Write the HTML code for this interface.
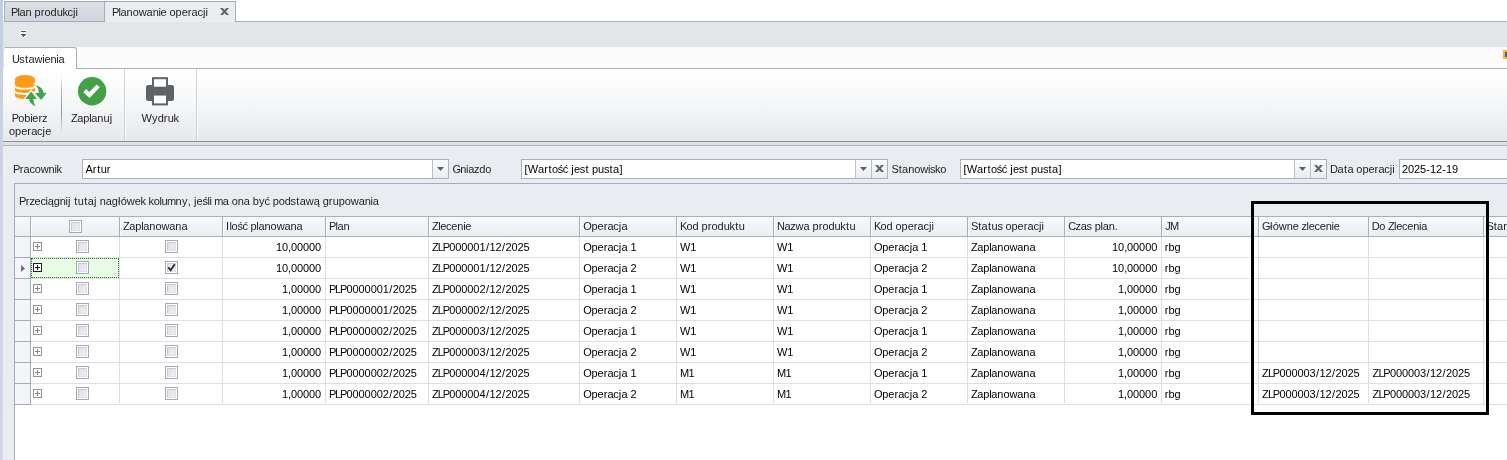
<!DOCTYPE html>
<html><head><meta charset="utf-8">
<style>
html,body{margin:0;padding:0;}
body{width:1507px;height:460px;overflow:hidden;position:relative;background:#e9ecf1;font-family:"Liberation Sans",sans-serif;font-size:11px;}
div,span,svg,i,b{position:absolute;box-sizing:border-box;display:block;}
.t{white-space:pre;line-height:12px;font-size:11px;color:#1e1e1e;font-kerning:none;}
.t span{position:static;display:inline;}
.k0{letter-spacing:-0.9px}.k1{letter-spacing:-0.3px}.k2{letter-spacing:-0.1px}.k3{letter-spacing:0.1px}.k4{letter-spacing:-0.5px}.k5{letter-spacing:0.05px}.k6{letter-spacing:-0.45px}.k7{letter-spacing:-0.05px}.k8{letter-spacing:-0.7px}.k9{letter-spacing:0.2px}.k10{letter-spacing:0.4px}.k11{letter-spacing:-0.2px}.k12{letter-spacing:-0.75px}.k13{letter-spacing:-0.4px}.k14{letter-spacing:0.55px}.k15{letter-spacing:0.0px}.k16{letter-spacing:0.65px}.k17{letter-spacing:0.35px}.k18{letter-spacing:-0.85px}.k19{letter-spacing:0.3px}.k20{letter-spacing:-0.25px}.k21{letter-spacing:0.25px}.k22{letter-spacing:0.45px}.k23{letter-spacing:0.95px}.k24{letter-spacing:-0.55px}.k25{letter-spacing:-0.65px}.k26{letter-spacing:-0.6px}.k27{letter-spacing:-0.35px}.k28{letter-spacing:-1.15px}.k29{letter-spacing:-1.25px}
/* top tab strip */
#strip{left:0;top:0;width:3px;height:460px;background:linear-gradient(#c4cee3,#cad4e5 45%,#ced8e9);}
#strip2{left:3px;top:146px;width:1px;height:314px;background:#eff1f5;}
#tabbar{left:3px;top:0;width:1504px;height:21px;background:#fff;}
#tab1{left:4px;top:1px;width:101px;height:21px;border:1px solid #a4acb7;background:linear-gradient(#dadde2,#d2d6dc);}
#tab2{left:104px;top:1px;width:132px;height:21px;border:1px solid #a4acb7;border-bottom:none;background:#eaecf0;}
#tabline{left:236px;top:21px;width:1271px;height:1px;background:#a9b0ba;}
#qat{left:3px;top:22px;width:1504px;height:25px;background:#e3e6e9;}
/* ribbon */
#rhead{left:3px;top:47px;width:1504px;height:21px;background:#fbfbfb;}
#rheadline{left:76px;top:68px;width:1431px;height:1px;background:#aab0b8;}
#rtab{left:3px;top:47px;width:74px;height:22px;border:1px solid #aab0b8;border-left-color:#dfe3ea;border-bottom:none;border-radius:3px 3px 0 0;background:#fff;}
#rbody{left:3px;top:69px;width:1504px;height:72px;background:linear-gradient(#ffffff 0%,#f7f8f9 40%,#e6e8ec 100%);}
#rbottom{left:3px;top:141px;width:1504px;height:1px;background:#8d9197;}
#rgap{left:3px;top:142px;width:1504px;height:4px;background:linear-gradient(#dcdfe2,#e4e6e9);}
#ptop{left:3px;top:145px;width:1504px;height:1px;background:#b0b5bc;}
.rsep{top:76px;width:1px;height:58px;background:linear-gradient(rgba(160,164,170,0),#b0b4b9 25%,#92969c 65%,rgba(160,164,170,0));}
.gsep{top:69px;width:2px;height:72px;border-left:1px solid #ced1d6;background:rgba(255,255,255,.7);}
/* inputs */
.inp{top:159px;height:20px;border:1px solid #a9b1bd;background:#fff;}
.btn{top:160px;height:18px;width:16px;border-left:1px solid #b9c0ca;background:linear-gradient(#fdfdfe,#e9ebef);}
/* grid */
#gridborder{left:14px;top:183px;width:1500px;height:300px;border:1px solid #a4acb8;background:#fff;}
#group{left:15px;top:184px;width:1492px;height:32px;background:#e9ecf1;}
#hdr{left:15px;top:216px;width:1492px;height:21px;border-top:1px solid #a7afbb;border-bottom:1px solid #a7afbb;background:linear-gradient(#f7f8fa,#eceef2);}
#ind{left:15px;top:237px;width:16px;height:168px;background:#f4f5f8;border-right:1px solid #a3abb8;}
.indline{left:15px;width:16px;height:1px;background:#a3abb8;}
.hsep{top:217px;width:2px;height:19px;border-left:1px solid #a7afbb;background:#fafbfc;}
.vline{top:237px;width:1px;height:168px;background:#dddfe4;}
.rowline{left:15px;width:1492px;height:1px;background:#dddfe4;}
.cb{width:13px;height:13px;border:1px solid #a3aab6;background:#fff;}
.cb:before{content:"";position:absolute;box-sizing:border-box;left:1px;top:1px;width:9px;height:9px;border:1px solid #dfe1e5;border-top-color:#c6cad0;border-left-color:#c6cad0;background:linear-gradient(135deg,#e0e1e3,#efeff0);}
.exp{left:33px;width:9px;height:9px;border:1px solid #919397;background:#fff;}
.exp i{left:1px;top:3px;width:5px;height:1px;background:#85878b;}
.exp b{left:3px;top:1px;width:1px;height:5px;background:#85878b;}
.exp.sel{border-color:#222;border-width:1px;outline:0;}
.exp.sel i,.exp.sel b{background:#111;}
#focus{background:#e8fbe5;border:1px dotted #0a7d0a;}
#txt{left:0;top:0;width:1507px;height:460px;will-change:transform;}
</style></head><body>
<div id="strip"></div>
<div id="strip2"></div>
<div id="tabbar"></div>
<div id="tabline"></div>
<div id="tab1"></div>
<div id="tab2"></div>
<div id="qat"></div>
<div id="rhead"></div>
<div id="rheadline"></div>
<div id="rtab"></div>
<div id="rbody"></div>
<div id="rbottom"></div>
<div id="rgap"></div>
<div id="ptop"></div>
<div class="rsep" style="left:61px"></div>
<div class="gsep" style="left:124px"></div>
<div class="gsep" style="left:196px"></div>
<!-- inputs -->
<div class="inp" style="left:82px;width:367px"></div><div class="btn" style="left:432px"></div>
<div class="inp" style="left:521px;width:367px"></div><div class="btn" style="left:855px"></div><div class="btn" style="left:871px"></div>
<div class="inp" style="left:960px;width:367px"></div><div class="btn" style="left:1294px"></div><div class="btn" style="left:1310px"></div>
<div class="inp" style="left:1399px;width:120px"></div>
<!-- qat arrow -->
<svg style="left:19px;top:29px" width="9" height="10" viewBox="19 29 9 10">
<path d="M20.3 30.3 H26.7 V35 L23.5 38.3 L20.3 35 Z" fill="#f1f3f5" stroke="#eceef0" stroke-width="0.8"/>
<rect x="21" y="31" width="5" height="1" fill="#555a61"/>
<rect x="21" y="34" width="5" height="1" fill="#555a61"/><rect x="22" y="35" width="3" height="1" fill="#555a61"/><rect x="23" y="36" width="1" height="1" fill="#555a61"/>
</svg>
<!-- tab close X -->
<svg style="left:220px;top:8px" width="9" height="7" viewBox="0 0 9 7"><path d="M0 0 H2.8 L9 7 H6.2 Z" fill="#5f636a"/><path d="M9 0 H6.2 L0 7 H2.8 Z" fill="#5f636a"/></svg>
<!-- DB icon -->
<svg style="left:14px;top:74px" width="34" height="34" viewBox="14 74 34 34">
 <defs><clipPath id="dbc"><path d="M14.9 79.5 A10.1 4.6 0 0 1 35.1 79.5 L35.1 95.8 A10.1 3.2 0 0 1 14.9 95.8 Z"/></clipPath></defs>
 <path d="M14.9 79.5 A10.1 4.6 0 0 1 35.1 79.5 L35.1 95.8 A10.1 3.2 0 0 1 14.9 95.8 Z" fill="#ff9a14"/>
 <path d="M14.9 85.7 A10.1 3 0 0 0 35.1 85.7" fill="none" stroke="#fff" stroke-width="1.8"/>
 <path d="M14.9 91.3 A10.1 2.7 0 0 0 35.1 91.3" fill="none" stroke="#fff" stroke-width="1.8"/>
 <g clip-path="url(#dbc)">
  <path d="M31.2 91.4 L36.8 98.9 L33.3 98.9 Q33.6 103.5 35.6 106.3 Q30 104 28.9 98.9 L25.2 98.9 Z" fill="#fff" stroke="#fff" stroke-width="2.2"/>
  <path d="M41.1 100.1 L46.7 93.1 L43.8 93.1 Q43 87.2 36 85.2 Q38.7 88.3 38.9 93.1 L35.1 93.1 Z" fill="#fff" stroke="#fff" stroke-width="2.2"/>
 </g>
 <path d="M31.2 91.4 L36.8 98.9 L33.3 98.9 Q33.6 103.5 35.6 106.3 Q30 104 28.9 98.9 L25.2 98.9 Z" fill="#3ea54a"/>
 <path d="M41.1 100.1 L46.7 93.1 L43.8 93.1 Q43 87.2 36 85.2 Q38.7 88.3 38.9 93.1 L35.1 93.1 Z" fill="#3ea54a"/>
</svg>
<!-- Check icon -->
<svg style="left:76px;top:75px" width="32" height="32" viewBox="76 75 32 32">
 <circle cx="92.1" cy="91.2" r="14.2" fill="#43a047"/>
 <path d="M84.7 90.6 L89.5 95 L98.2 85.9" fill="none" stroke="#fff" stroke-width="4.2"/>
</svg>
<!-- Printer icon -->
<svg style="left:144px;top:75px" width="32" height="32" viewBox="144 75 32 32">
 <path d="M148.5 85 H171.5 Q174 85 174 87.5 V98.5 Q174 101 171.5 101 H148.5 Q146 101 146 98.5 V87.5 Q146 85 148.5 85 Z" fill="#5f6368"/>
 <rect x="153" y="78.2" width="14" height="9.5" fill="#fff" stroke="#5f6368" stroke-width="2"/>
 <rect x="153" y="94.6" width="14" height="9.8" fill="#fff" stroke="#5f6368" stroke-width="2"/>
</svg>
<!-- dropdown arrows -->
<svg class="dd" style="left:437px;top:167px" width="7" height="4" viewBox="0 0 7 4"><path d="M0 0 H7 L3.5 4 Z" fill="#596069"/></svg>
<svg class="dd" style="left:860px;top:167px" width="7" height="4" viewBox="0 0 7 4"><path d="M0 0 H7 L3.5 4 Z" fill="#596069"/></svg>
<svg class="dd" style="left:1299px;top:167px" width="7" height="4" viewBox="0 0 7 4"><path d="M0 0 H7 L3.5 4 Z" fill="#596069"/></svg>
<!-- clear X buttons -->
<svg style="left:875px;top:165px" width="9" height="7" viewBox="0 0 9 7"><path d="M0 0 H2.8 L9 7 H6.2 Z" fill="#5f636a"/><path d="M9 0 H6.2 L0 7 H2.8 Z" fill="#5f636a"/></svg>
<svg style="left:1314px;top:165px" width="9" height="7" viewBox="0 0 9 7"><path d="M0 0 H2.8 L9 7 H6.2 Z" fill="#5f636a"/><path d="M9 0 H6.2 L0 7 H2.8 Z" fill="#5f636a"/></svg>
<!-- orange thing at right edge -->
<div style="left:1503px;top:50px;width:4px;height:9px;background:#fbb03b"></div>
<div style="left:1505px;top:52px;width:2px;height:5px;background:#5a6068"></div>

<!-- grid -->
<div id="gridborder"></div>
<div id="group"></div>
<div id="hdr"></div>
<div id="ind"></div>
<div class="hsep" style="left:119px"></div>
<div class="vline" style="left:119px"></div>
<div class="hsep" style="left:222px"></div>
<div class="vline" style="left:222px"></div>
<div class="hsep" style="left:325px"></div>
<div class="vline" style="left:325px"></div>
<div class="hsep" style="left:428px"></div>
<div class="vline" style="left:428px"></div>
<div class="hsep" style="left:579px"></div>
<div class="vline" style="left:579px"></div>
<div class="hsep" style="left:676px"></div>
<div class="vline" style="left:676px"></div>
<div class="hsep" style="left:773px"></div>
<div class="vline" style="left:773px"></div>
<div class="hsep" style="left:870px"></div>
<div class="vline" style="left:870px"></div>
<div class="hsep" style="left:967px"></div>
<div class="vline" style="left:967px"></div>
<div class="hsep" style="left:1064px"></div>
<div class="vline" style="left:1064px"></div>
<div class="hsep" style="left:1161px"></div>
<div class="vline" style="left:1161px"></div>
<div class="hsep" style="left:1258px"></div>
<div class="vline" style="left:1258px"></div>
<div class="hsep" style="left:1368px"></div>
<div class="vline" style="left:1368px"></div>
<div class="hsep" style="left:1483px"></div>
<div class="vline" style="left:1483px"></div>
<div class="hsep" style="left:30px"></div>
<div class="rowline" style="top:257px"></div>
<div class="indline" style="top:257px"></div>
<div class="exp" style="top:242px"><i></i><b></b></div>
<div class="cb" style="left:76px;top:240px"></div>
<div class="cb" style="left:165px;top:240px"></div>
<div class="rowline" style="top:278px"></div>
<div class="indline" style="top:278px"></div>
<div id="focus" style="left:31px;top:258px;width:88px;height:20px"></div>
<div class="exp sel" style="top:263px"><i></i><b></b></div>
<div class="cb" style="left:76px;top:261px"></div>
<div class="cb" style="left:165px;top:261px"><svg style="left:1px;top:1px" width="9" height="9" viewBox="0 0 9 9"><path d="M1.2 4.2 L3.6 7.2 L7.8 1.2" fill="none" stroke="#2a2a2a" stroke-width="1.8"/></svg></div>
<div class="rowline" style="top:299px"></div>
<div class="indline" style="top:299px"></div>
<div class="exp" style="top:284px"><i></i><b></b></div>
<div class="cb" style="left:76px;top:282px"></div>
<div class="cb" style="left:165px;top:282px"></div>
<div class="rowline" style="top:320px"></div>
<div class="indline" style="top:320px"></div>
<div class="exp" style="top:305px"><i></i><b></b></div>
<div class="cb" style="left:76px;top:303px"></div>
<div class="cb" style="left:165px;top:303px"></div>
<div class="rowline" style="top:341px"></div>
<div class="indline" style="top:341px"></div>
<div class="exp" style="top:326px"><i></i><b></b></div>
<div class="cb" style="left:76px;top:324px"></div>
<div class="cb" style="left:165px;top:324px"></div>
<div class="rowline" style="top:362px"></div>
<div class="indline" style="top:362px"></div>
<div class="exp" style="top:347px"><i></i><b></b></div>
<div class="cb" style="left:76px;top:345px"></div>
<div class="cb" style="left:165px;top:345px"></div>
<div class="rowline" style="top:383px"></div>
<div class="indline" style="top:383px"></div>
<div class="exp" style="top:368px"><i></i><b></b></div>
<div class="cb" style="left:76px;top:366px"></div>
<div class="cb" style="left:165px;top:366px"></div>
<div class="rowline" style="top:404px"></div>
<div class="indline" style="top:404px"></div>
<div class="exp" style="top:389px"><i></i><b></b></div>
<div class="cb" style="left:76px;top:387px"></div>
<div class="cb" style="left:165px;top:387px"></div>
<div class="cb" style="left:69px;top:220px"></div>
<div id="txt"><span class="t" style="left:11.00px;top:6px"><span class="k0">P</span><span class="k1">l</span><span class="k2">an </span><span class="k3">pr</span><span class="k2">od</span><span class="k1">u</span><span class="k4">k</span><span class="k5">cj</span><span class="k6">i</span></span>
<span class="t" style="left:112.00px;top:6px"><span class="k0">P</span><span class="k1">l</span><span class="k2">an</span><span class="k7">ow</span><span class="k2">a</span><span class="k1">ni</span><span class="k2">e op</span><span class="k3">er</span><span class="k1">a</span><span class="k5">cj</span><span class="k6">i</span></span>
<span class="t" style="left:12.00px;top:53px"><span class="k8">U</span><span class="k9">s</span><span class="k10">t</span><span class="k7">a</span><span class="k11">w</span><span class="k1">i</span><span class="k2">e</span><span class="k1">ni</span><span class="k2">a</span></span>
<span class="t" style="left:11.70px;top:112px"><span class="k12">P</span><span class="k2">o</span><span class="k1">bi</span><span class="k3">e</span><span class="k2">r</span><span class="k4">z</span></span>
<span class="t" style="left:9.10px;top:125px"><span class="k2">op</span><span class="k3">er</span><span class="k1">a</span><span class="k5">c</span><span class="k9">j</span><span class="k2">e</span></span>
<span class="t" style="left:71.00px;top:112px"><span class="k13">Z</span><span class="k2">a</span><span class="k1">pl</span><span class="k2">an</span><span class="k9">u</span><span class="k14">j</span></span>
<span class="t" style="left:141.50px;top:112px"><span class="k5">W</span><span class="k9">y</span><span class="k3">dr</span><span class="k1">u</span><span class="k4">k</span></span>
<span class="t" style="left:13.00px;top:163px"><span class="k4">P</span><span class="k3">r</span><span class="k1">ac</span><span class="k7">ow</span><span class="k1">n</span><span class="k6">i</span><span class="k4">k</span></span>
<span class="t" style="left:85.50px;top:163px;color:#000"><span class="k15">A</span><span class="k16">r</span><span class="k10">t</span><span class="k3">u</span><span class="k17">r</span></span>
<span class="t" style="left:452.50px;top:163px"><span class="k18">G</span><span class="k1">niaz</span><span class="k2">do</span></span>
<span class="t" style="left:524.50px;top:163px;color:#000"><span class="k19">[</span><span class="k20">W</span><span class="k3">a</span><span class="k16">r</span><span class="k10">t</span><span class="k1">o</span><span class="k4">ś</span><span class="k1">ć</span><span class="k21"> </span><span class="k9">j</span><span class="k1">e</span><span class="k9">s</span><span class="k22">t</span><span class="k2"> p</span><span class="k1">u</span><span class="k9">s</span><span class="k10">ta</span><span class="k23">]</span></span>
<span class="t" style="left:891.50px;top:163px"><span class="k11">S</span><span class="k10">t</span><span class="k2">an</span><span class="k7">o</span><span class="k11">w</span><span class="k6">i</span><span class="k4">s</span><span class="k1">k</span><span class="k2">o</span></span>
<span class="t" style="left:963.50px;top:163px;color:#000"><span class="k19">[</span><span class="k20">W</span><span class="k3">a</span><span class="k16">r</span><span class="k10">t</span><span class="k1">o</span><span class="k4">ś</span><span class="k1">ć</span><span class="k21"> </span><span class="k9">j</span><span class="k1">e</span><span class="k9">s</span><span class="k22">t</span><span class="k2"> p</span><span class="k1">u</span><span class="k9">s</span><span class="k10">ta</span><span class="k23">]</span></span>
<span class="t" style="left:1330.00px;top:163px"><span class="k24">D</span><span class="k10">at</span><span class="k2">a op</span><span class="k3">er</span><span class="k1">a</span><span class="k5">cj</span><span class="k6">i</span></span>
<span class="t" style="left:1402.00px;top:163px;color:#000"><span class="k2">202</span><span class="k3">5-</span><span class="k2">1</span><span class="k3">2-</span><span class="k2">19</span></span>
<span class="t" style="left:19.00px;top:195px"><span class="k4">P</span><span class="k2">r</span><span class="k1">ze</span><span class="k6">c</span><span class="k1">i</span><span class="k2">ąg</span><span class="k1">n</span><span class="k5">i</span><span class="k21">j</span><span class="k22"> </span><span class="k10">tut</span><span class="k9">a</span><span class="k21">j</span><span class="k2"> na</span><span class="k9">gł</span><span class="k7">ów</span><span class="k1">ek kol</span><span class="k25">um</span><span class="k9">ny</span><span class="k7">,</span><span class="k21"> </span><span class="k9">j</span><span class="k1">e</span><span class="k6">śl</span><span class="k20">i</span><span class="k26"> </span><span class="k25">m</span><span class="k2">a ona </span><span class="k9">b</span><span class="k15">y</span><span class="k1">ć</span><span class="k2"> po</span><span class="k1">d</span><span class="k9">s</span><span class="k10">t</span><span class="k7">aw</span><span class="k2">ą </span><span class="k3">gr</span><span class="k2">up</span><span class="k7">ow</span><span class="k2">a</span><span class="k1">ni</span><span class="k2">a</span></span>
<span class="t" style="left:123.00px;top:220px"><span class="k13">Z</span><span class="k2">a</span><span class="k1">pl</span><span class="k2">an</span><span class="k7">ow</span><span class="k2">ana</span></span>
<span class="t" style="left:226.10px;top:220px"><span class="k21">I</span><span class="k1">lo</span><span class="k4">ś</span><span class="k1">ć</span><span class="k2"> </span><span class="k1">pl</span><span class="k2">an</span><span class="k7">ow</span><span class="k2">ana</span></span>
<span class="t" style="left:329.00px;top:220px"><span class="k0">P</span><span class="k1">l</span><span class="k2">an</span></span>
<span class="t" style="left:432.00px;top:220px"><span class="k26">Z</span><span class="k1">lec</span><span class="k2">e</span><span class="k1">ni</span><span class="k2">e</span></span>
<span class="t" style="left:583.20px;top:220px"><span class="k27">O</span><span class="k2">p</span><span class="k3">er</span><span class="k1">a</span><span class="k5">c</span><span class="k9">j</span><span class="k2">a</span></span>
<span class="t" style="left:680.00px;top:220px"><span class="k12">K</span><span class="k2">od </span><span class="k3">pr</span><span class="k2">od</span><span class="k1">u</span><span class="k9">k</span><span class="k10">t</span><span class="k2">u</span></span>
<span class="t" style="left:777.00px;top:220px"><span class="k24">N</span><span class="k1">a</span><span class="k11">z</span><span class="k7">w</span><span class="k2">a </span><span class="k3">pr</span><span class="k2">od</span><span class="k1">u</span><span class="k9">k</span><span class="k10">t</span><span class="k2">u</span></span>
<span class="t" style="left:874.00px;top:220px"><span class="k12">K</span><span class="k2">od op</span><span class="k3">er</span><span class="k1">a</span><span class="k5">cj</span><span class="k6">i</span></span>
<span class="t" style="left:971.00px;top:220px"><span class="k11">S</span><span class="k10">tat</span><span class="k1">us</span><span class="k2"> op</span><span class="k3">er</span><span class="k1">a</span><span class="k5">cj</span><span class="k6">i</span></span>
<span class="t" style="left:1068.30px;top:220px"><span class="k8">C</span><span class="k1">zas</span><span class="k2"> </span><span class="k1">pl</span><span class="k2">an</span><span class="k7">.</span></span>
<span class="t" style="left:1165.30px;top:220px"><span class="k18">J</span><span class="k28">M</span></span>
<span class="t" style="left:1262.00px;top:220px"><span class="k4">G</span><span class="k9">ł</span><span class="k7">ów</span><span class="k2">ne</span><span class="k1"> </span><span class="k6">z</span><span class="k1">lec</span><span class="k2">e</span><span class="k1">ni</span><span class="k2">e</span></span>
<span class="t" style="left:1371.80px;top:220px"><span class="k24">D</span><span class="k2">o</span><span class="k13"> </span><span class="k26">Z</span><span class="k1">lec</span><span class="k2">e</span><span class="k1">ni</span><span class="k2">a</span></span>
<span class="t" style="left:1486.50px;top:220px"><span class="k11">S</span><span class="k10">t</span><span class="k2">an</span></span>
<span class="t" style="left:276.00px;top:241px;color:#000"><span class="k2">10,00000</span></span>
<span class="t" style="left:432.00px;top:241px;color:#000"><span class="k0">Z</span><span class="k29">L</span><span class="k12">P</span><span class="k2">00000</span><span class="k10">1/</span><span class="k2">1</span><span class="k10">2/</span><span class="k2">2025</span></span>
<span class="t" style="left:583.20px;top:241px;color:#000"><span class="k27">O</span><span class="k2">p</span><span class="k3">er</span><span class="k1">a</span><span class="k5">c</span><span class="k9">j</span><span class="k2">a 1</span></span>
<span class="t" style="left:680.00px;top:241px;color:#000"><span class="k20">W</span><span class="k2">1</span></span>
<span class="t" style="left:777.00px;top:241px;color:#000"><span class="k20">W</span><span class="k2">1</span></span>
<span class="t" style="left:874.00px;top:241px;color:#000"><span class="k27">O</span><span class="k2">p</span><span class="k3">er</span><span class="k1">a</span><span class="k5">c</span><span class="k9">j</span><span class="k2">a 1</span></span>
<span class="t" style="left:971.00px;top:241px;color:#000"><span class="k13">Z</span><span class="k2">a</span><span class="k1">pl</span><span class="k2">an</span><span class="k7">ow</span><span class="k2">ana</span></span>
<span class="t" style="left:1112.10px;top:241px;color:#000"><span class="k2">10,00000</span></span>
<span class="t" style="left:1164.70px;top:241px;color:#000"><span class="k3">r</span><span class="k2">bg</span></span>
<span class="t" style="left:276.00px;top:262px;color:#000"><span class="k2">10,00000</span></span>
<span class="t" style="left:432.00px;top:262px;color:#000"><span class="k0">Z</span><span class="k29">L</span><span class="k12">P</span><span class="k2">00000</span><span class="k10">1/</span><span class="k2">1</span><span class="k10">2/</span><span class="k2">2025</span></span>
<span class="t" style="left:583.20px;top:262px;color:#000"><span class="k27">O</span><span class="k2">p</span><span class="k3">er</span><span class="k1">a</span><span class="k5">c</span><span class="k9">j</span><span class="k2">a 2</span></span>
<span class="t" style="left:680.00px;top:262px;color:#000"><span class="k20">W</span><span class="k2">1</span></span>
<span class="t" style="left:777.00px;top:262px;color:#000"><span class="k20">W</span><span class="k2">1</span></span>
<span class="t" style="left:874.00px;top:262px;color:#000"><span class="k27">O</span><span class="k2">p</span><span class="k3">er</span><span class="k1">a</span><span class="k5">c</span><span class="k9">j</span><span class="k2">a 2</span></span>
<span class="t" style="left:971.00px;top:262px;color:#000"><span class="k13">Z</span><span class="k2">a</span><span class="k1">pl</span><span class="k2">an</span><span class="k7">ow</span><span class="k2">ana</span></span>
<span class="t" style="left:1112.10px;top:262px;color:#000"><span class="k2">10,00000</span></span>
<span class="t" style="left:1164.70px;top:262px;color:#000"><span class="k3">r</span><span class="k2">bg</span></span>
<span class="t" style="left:282.00px;top:283px;color:#000"><span class="k2">1,00000</span></span>
<span class="t" style="left:329.00px;top:283px;color:#000"><span class="k29">PL</span><span class="k12">P</span><span class="k2">000000</span><span class="k10">1/</span><span class="k2">2025</span></span>
<span class="t" style="left:432.00px;top:283px;color:#000"><span class="k0">Z</span><span class="k29">L</span><span class="k12">P</span><span class="k2">00000</span><span class="k10">2/</span><span class="k2">1</span><span class="k10">2/</span><span class="k2">2025</span></span>
<span class="t" style="left:583.20px;top:283px;color:#000"><span class="k27">O</span><span class="k2">p</span><span class="k3">er</span><span class="k1">a</span><span class="k5">c</span><span class="k9">j</span><span class="k2">a 1</span></span>
<span class="t" style="left:680.00px;top:283px;color:#000"><span class="k20">W</span><span class="k2">1</span></span>
<span class="t" style="left:777.00px;top:283px;color:#000"><span class="k20">W</span><span class="k2">1</span></span>
<span class="t" style="left:874.00px;top:283px;color:#000"><span class="k27">O</span><span class="k2">p</span><span class="k3">er</span><span class="k1">a</span><span class="k5">c</span><span class="k9">j</span><span class="k2">a 1</span></span>
<span class="t" style="left:971.00px;top:283px;color:#000"><span class="k13">Z</span><span class="k2">a</span><span class="k1">pl</span><span class="k2">an</span><span class="k7">ow</span><span class="k2">ana</span></span>
<span class="t" style="left:1118.10px;top:283px;color:#000"><span class="k2">1,00000</span></span>
<span class="t" style="left:1164.70px;top:283px;color:#000"><span class="k3">r</span><span class="k2">bg</span></span>
<span class="t" style="left:282.00px;top:304px;color:#000"><span class="k2">1,00000</span></span>
<span class="t" style="left:329.00px;top:304px;color:#000"><span class="k29">PL</span><span class="k12">P</span><span class="k2">000000</span><span class="k10">1/</span><span class="k2">2025</span></span>
<span class="t" style="left:432.00px;top:304px;color:#000"><span class="k0">Z</span><span class="k29">L</span><span class="k12">P</span><span class="k2">00000</span><span class="k10">2/</span><span class="k2">1</span><span class="k10">2/</span><span class="k2">2025</span></span>
<span class="t" style="left:583.20px;top:304px;color:#000"><span class="k27">O</span><span class="k2">p</span><span class="k3">er</span><span class="k1">a</span><span class="k5">c</span><span class="k9">j</span><span class="k2">a 2</span></span>
<span class="t" style="left:680.00px;top:304px;color:#000"><span class="k20">W</span><span class="k2">1</span></span>
<span class="t" style="left:777.00px;top:304px;color:#000"><span class="k20">W</span><span class="k2">1</span></span>
<span class="t" style="left:874.00px;top:304px;color:#000"><span class="k27">O</span><span class="k2">p</span><span class="k3">er</span><span class="k1">a</span><span class="k5">c</span><span class="k9">j</span><span class="k2">a 2</span></span>
<span class="t" style="left:971.00px;top:304px;color:#000"><span class="k13">Z</span><span class="k2">a</span><span class="k1">pl</span><span class="k2">an</span><span class="k7">ow</span><span class="k2">ana</span></span>
<span class="t" style="left:1118.10px;top:304px;color:#000"><span class="k2">1,00000</span></span>
<span class="t" style="left:1164.70px;top:304px;color:#000"><span class="k3">r</span><span class="k2">bg</span></span>
<span class="t" style="left:282.00px;top:325px;color:#000"><span class="k2">1,00000</span></span>
<span class="t" style="left:329.00px;top:325px;color:#000"><span class="k29">PL</span><span class="k12">P</span><span class="k2">000000</span><span class="k10">2/</span><span class="k2">2025</span></span>
<span class="t" style="left:432.00px;top:325px;color:#000"><span class="k0">Z</span><span class="k29">L</span><span class="k12">P</span><span class="k2">00000</span><span class="k10">3/</span><span class="k2">1</span><span class="k10">2/</span><span class="k2">2025</span></span>
<span class="t" style="left:583.20px;top:325px;color:#000"><span class="k27">O</span><span class="k2">p</span><span class="k3">er</span><span class="k1">a</span><span class="k5">c</span><span class="k9">j</span><span class="k2">a 1</span></span>
<span class="t" style="left:680.00px;top:325px;color:#000"><span class="k20">W</span><span class="k2">1</span></span>
<span class="t" style="left:777.00px;top:325px;color:#000"><span class="k20">W</span><span class="k2">1</span></span>
<span class="t" style="left:874.00px;top:325px;color:#000"><span class="k27">O</span><span class="k2">p</span><span class="k3">er</span><span class="k1">a</span><span class="k5">c</span><span class="k9">j</span><span class="k2">a 1</span></span>
<span class="t" style="left:971.00px;top:325px;color:#000"><span class="k13">Z</span><span class="k2">a</span><span class="k1">pl</span><span class="k2">an</span><span class="k7">ow</span><span class="k2">ana</span></span>
<span class="t" style="left:1118.10px;top:325px;color:#000"><span class="k2">1,00000</span></span>
<span class="t" style="left:1164.70px;top:325px;color:#000"><span class="k3">r</span><span class="k2">bg</span></span>
<span class="t" style="left:282.00px;top:346px;color:#000"><span class="k2">1,00000</span></span>
<span class="t" style="left:329.00px;top:346px;color:#000"><span class="k29">PL</span><span class="k12">P</span><span class="k2">000000</span><span class="k10">2/</span><span class="k2">2025</span></span>
<span class="t" style="left:432.00px;top:346px;color:#000"><span class="k0">Z</span><span class="k29">L</span><span class="k12">P</span><span class="k2">00000</span><span class="k10">3/</span><span class="k2">1</span><span class="k10">2/</span><span class="k2">2025</span></span>
<span class="t" style="left:583.20px;top:346px;color:#000"><span class="k27">O</span><span class="k2">p</span><span class="k3">er</span><span class="k1">a</span><span class="k5">c</span><span class="k9">j</span><span class="k2">a 2</span></span>
<span class="t" style="left:680.00px;top:346px;color:#000"><span class="k20">W</span><span class="k2">1</span></span>
<span class="t" style="left:777.00px;top:346px;color:#000"><span class="k20">W</span><span class="k2">1</span></span>
<span class="t" style="left:874.00px;top:346px;color:#000"><span class="k27">O</span><span class="k2">p</span><span class="k3">er</span><span class="k1">a</span><span class="k5">c</span><span class="k9">j</span><span class="k2">a 2</span></span>
<span class="t" style="left:971.00px;top:346px;color:#000"><span class="k13">Z</span><span class="k2">a</span><span class="k1">pl</span><span class="k2">an</span><span class="k7">ow</span><span class="k2">ana</span></span>
<span class="t" style="left:1118.10px;top:346px;color:#000"><span class="k2">1,00000</span></span>
<span class="t" style="left:1164.70px;top:346px;color:#000"><span class="k3">r</span><span class="k2">bg</span></span>
<span class="t" style="left:282.00px;top:367px;color:#000"><span class="k2">1,00000</span></span>
<span class="t" style="left:329.00px;top:367px;color:#000"><span class="k29">PL</span><span class="k12">P</span><span class="k2">000000</span><span class="k10">2/</span><span class="k2">2025</span></span>
<span class="t" style="left:432.00px;top:367px;color:#000"><span class="k0">Z</span><span class="k29">L</span><span class="k12">P</span><span class="k2">00000</span><span class="k10">4/</span><span class="k2">1</span><span class="k10">2/</span><span class="k2">2025</span></span>
<span class="t" style="left:583.20px;top:367px;color:#000"><span class="k27">O</span><span class="k2">p</span><span class="k3">er</span><span class="k1">a</span><span class="k5">c</span><span class="k9">j</span><span class="k2">a 1</span></span>
<span class="t" style="left:680.00px;top:367px;color:#000"><span class="k25">M</span><span class="k2">1</span></span>
<span class="t" style="left:777.00px;top:367px;color:#000"><span class="k25">M</span><span class="k2">1</span></span>
<span class="t" style="left:874.00px;top:367px;color:#000"><span class="k27">O</span><span class="k2">p</span><span class="k3">er</span><span class="k1">a</span><span class="k5">c</span><span class="k9">j</span><span class="k2">a 1</span></span>
<span class="t" style="left:971.00px;top:367px;color:#000"><span class="k13">Z</span><span class="k2">a</span><span class="k1">pl</span><span class="k2">an</span><span class="k7">ow</span><span class="k2">ana</span></span>
<span class="t" style="left:1118.10px;top:367px;color:#000"><span class="k2">1,00000</span></span>
<span class="t" style="left:1164.70px;top:367px;color:#000"><span class="k3">r</span><span class="k2">bg</span></span>
<span class="t" style="left:1262.10px;top:367px;color:#000"><span class="k0">Z</span><span class="k29">L</span><span class="k12">P</span><span class="k2">00000</span><span class="k10">3/</span><span class="k2">1</span><span class="k10">2/</span><span class="k2">2025</span></span>
<span class="t" style="left:1372.60px;top:367px;color:#000"><span class="k0">Z</span><span class="k29">L</span><span class="k12">P</span><span class="k2">00000</span><span class="k10">3/</span><span class="k2">1</span><span class="k10">2/</span><span class="k2">2025</span></span>
<span class="t" style="left:282.00px;top:388px;color:#000"><span class="k2">1,00000</span></span>
<span class="t" style="left:329.00px;top:388px;color:#000"><span class="k29">PL</span><span class="k12">P</span><span class="k2">000000</span><span class="k10">2/</span><span class="k2">2025</span></span>
<span class="t" style="left:432.00px;top:388px;color:#000"><span class="k0">Z</span><span class="k29">L</span><span class="k12">P</span><span class="k2">00000</span><span class="k10">4/</span><span class="k2">1</span><span class="k10">2/</span><span class="k2">2025</span></span>
<span class="t" style="left:583.20px;top:388px;color:#000"><span class="k27">O</span><span class="k2">p</span><span class="k3">er</span><span class="k1">a</span><span class="k5">c</span><span class="k9">j</span><span class="k2">a 2</span></span>
<span class="t" style="left:680.00px;top:388px;color:#000"><span class="k25">M</span><span class="k2">1</span></span>
<span class="t" style="left:777.00px;top:388px;color:#000"><span class="k25">M</span><span class="k2">1</span></span>
<span class="t" style="left:874.00px;top:388px;color:#000"><span class="k27">O</span><span class="k2">p</span><span class="k3">er</span><span class="k1">a</span><span class="k5">c</span><span class="k9">j</span><span class="k2">a 2</span></span>
<span class="t" style="left:971.00px;top:388px;color:#000"><span class="k13">Z</span><span class="k2">a</span><span class="k1">pl</span><span class="k2">an</span><span class="k7">ow</span><span class="k2">ana</span></span>
<span class="t" style="left:1118.10px;top:388px;color:#000"><span class="k2">1,00000</span></span>
<span class="t" style="left:1164.70px;top:388px;color:#000"><span class="k3">r</span><span class="k2">bg</span></span>
<span class="t" style="left:1262.10px;top:388px;color:#000"><span class="k0">Z</span><span class="k29">L</span><span class="k12">P</span><span class="k2">00000</span><span class="k10">3/</span><span class="k2">1</span><span class="k10">2/</span><span class="k2">2025</span></span>
<span class="t" style="left:1372.60px;top:388px;color:#000"><span class="k0">Z</span><span class="k29">L</span><span class="k12">P</span><span class="k2">00000</span><span class="k10">3/</span><span class="k2">1</span><span class="k10">2/</span><span class="k2">2025</span></span></div>
<!-- row indicator arrow -->
<svg style="left:21px;top:265px" width="5" height="7" viewBox="0 0 5 7"><path d="M0 0 L4 3.5 L0 7 Z" fill="#6d7179"/></svg>
<!-- black annotation rectangle -->
<div style="left:1251px;top:201px;width:238px;height:214px;border:3px solid #000"></div>

</body></html>
